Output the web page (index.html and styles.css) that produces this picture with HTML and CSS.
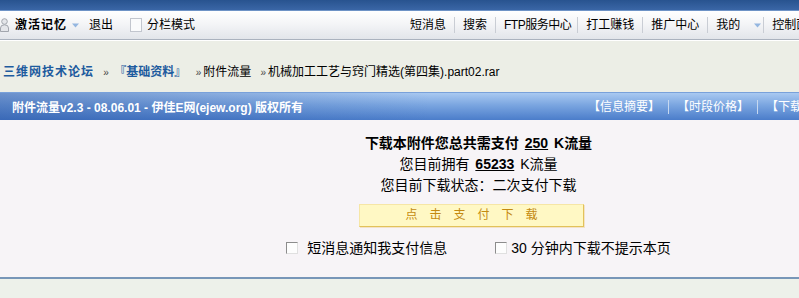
FILE: index.html
```html
<!DOCTYPE html>
<html lang="zh-CN">
<head>
    <meta charset="UTF-8" />
    <title>附件流量 - 三维网技术论坛</title>
    <link rel="stylesheet" href="styles.css">
</head>
<body>
    <div class="page">
        <div class="topband"></div>

        <div class="navbar">
            <div class="nav-left">
                <span class="user-icon">
                    <svg width="9" height="14" viewBox="0 0 9 14">
                        <circle cx="4.5" cy="3.5" r="2.8" fill="#e4e6ea" stroke="#9a9ea6" stroke-width="0.9"/>
                        <path d="M0.5 13.5 V10 Q0.5 6.8 4.5 6.8 Q8.5 6.8 8.5 10 V13.5 Z" fill="#e4e6ea" stroke="#9a9ea6" stroke-width="0.9"/>
                    </svg>
                </span>
                <a class="user-name" href="#">激活记忆</a>
                <svg class="drop" width="7" height="5" viewBox="0 0 7 5"><path d="M0 0.5 H7 L3.5 4.5 Z" fill="#94b6e0"/></svg>
                <a class="logout" href="#">退出</a>
                <span class="split-icon"></span>
                <a class="split" href="#">分栏模式</a>
            </div>
            <ul class="nav-right">
                <li>短消息</li>
                <li>搜索</li>
                <li class="ftp">FTP服务中心</li>
                <li>打工赚钱</li>
                <li>推广中心</li>
                <li class="mine">我的<svg class="drop" width="7" height="5" viewBox="0 0 7 5"><path d="M0 0.5 H7 L3.5 4.5 Z" fill="#94b6e0"/></svg></li>
                <li>控制面板</li>
                <li>退出</li>
            </ul>
        </div>

        <div class="breadcrumb">
            <a class="forum" href="#">三维网技术论坛</a>
            <span class="arrow">»</span>
            <a class="forum board" href="#">『基础资料』</a>
            <span class="arrow far">»</span>附件流量
            <span class="arrow">»</span>机械加工工艺与窍门精选(第四集).part02.rar
        </div>

        <div class="panel">
            <div class="panel-head">
                <span class="panel-title">附件流量v2.3 - 08.06.01 - 伊佳E网(ejew.org) 版权所有</span>
                <ul class="tabs">
                    <li>【信息摘要】</li>
                    <li>【时段价格】</li>
                    <li>【下载记录】</li>
                </ul>
            </div>
            <div class="panel-body">
                <p class="line need">下载本附件您总共需支付 <u>250</u> K流量</p>
                <p class="line">您目前拥有 <u>65233</u> K流量</p>
                <p class="line">您目前下载状态：二次支付下载</p>
                <div class="pay-row">
                    <a class="pay-btn" href="#">点击支付下载</a>
                </div>
                <div class="options">
                    <label class="option"><span class="check"></span>短消息通知我支付信息</label>
                    <label class="option"><span class="check"></span>30 分钟内下载不提示本页</label>
                </div>
            </div>
        </div>

        <div class="footband"></div>
    </div>
</body>
</html>
```

FILE: styles.css
```css
/* Reset */
html, body {
    margin: 0;
    padding: 0;
    overflow: hidden;
}
body {
    background: #eceee6;
    font-family: "Liberation Sans", "Noto Sans CJK SC", sans-serif;
    font-size: 12px;
    color: #000;
}
a {
    color: #000;
    text-decoration: none;
}
ul {
    list-style: none;
    margin: 0;
    padding: 0;
}
p {
    margin: 0;
}
.page {
    width: 957px;
}

/* Top band + nav */
.topband {
    height: 10px;
    background: linear-gradient(#28538f, #3a66a6);
    border-bottom: 1px solid #6e93c6;
}
.navbar {
    display: flex;
    align-items: center;
    height: 28px;
    background: linear-gradient(#ffffff, #f4f5f7 45%, #e2e5ea);
    border-bottom: 1px solid #aab2be;
    box-shadow: 0 1px 0 #fff;
    line-height: 16px;
}
.nav-left {
    display: flex;
    align-items: center;
    width: 410px;
}
.user-icon {
    display: flex;
    width: 9px;
    margin-right: 6px;
}
.user-name {
    font-weight: 700;
    letter-spacing: 1px;
}
.drop {
    display: block;
    margin-left: 5px;
}
.logout {
    margin-left: 10px;
}
.split-icon {
    width: 10px;
    height: 12px;
    margin-left: 17px;
    margin-right: 5px;
    border: 1px solid #c2c6ce;
    background: #fafbfc;
}
.nav-right {
    display: flex;
    align-items: center;
}
.nav-right li {
    padding: 0 8px;
    white-space: nowrap;
}
.nav-right li:first-child {
    padding-left: 0;
}
.nav-right li + li {
    border-left: 1px solid #c9cdd4;
}
.nav-right .ftp {
    letter-spacing: -0.5px;
    padding-right: 6px;
}
.nav-right .mine {
    display: flex;
    align-items: center;
    padding-right: 2px;
}
.nav-right .mine .drop {
    margin-left: 14px;
}

/* Breadcrumb */
.breadcrumb {
    padding: 24px 0 11px 3px;
    line-height: 16px;
    white-space: nowrap;
}
.forum {
    color: #1d5b9e;
    font-weight: 700;
    letter-spacing: 1px;
}
.forum.board {
    letter-spacing: 0;
}
.arrow {
    display: inline-block;
    margin: 0 2px 0 6px;
    font-size: 10px;
    color: #444;
}
.arrow.far {
    margin-left: 6px;
}

/* Panel */
.panel-head {
    display: flex;
    align-items: center;
    height: 27px;
    padding-left: 12px;
    border-top: 1px solid #79a1da;
    background: linear-gradient(90deg, rgba(36, 80, 160, 0.45), rgba(36, 80, 160, 0) 45%),
                linear-gradient(#a9c9f1, #7aa5e0 45%, #4b7dca);
    color: #fff;
    white-space: nowrap;
}
.panel-title {
    width: 568px;
    font-weight: 700;
}
.tabs {
    display: flex;
}
.tabs li {
    padding: 0 8px;
    line-height: 14px;
}
.tabs li + li {
    border-left: 1px solid #c6d8f0;
}
.panel-body {
    height: 144px;
    padding-top: 13px;
    background: #f7f4f7;
    font-size: 14px;
    text-align: center;
}
.line {
    line-height: 21px;
}
.need {
    font-weight: 700;
}
.line u {
    font-weight: 700;
    margin: 0 2px;
}
.pay-row {
    display: flex;
    justify-content: center;
    margin-top: 8px;
}
.pay-btn {
    display: block;
    width: 225px;
    height: 23px;
    margin-right: 14px;
    padding-left: 12px;
    box-sizing: border-box;
    border: 1px solid #f6e6a6;
    border-right-color: #e2c25a;
    border-bottom-color: #e2c25a;
    background: #fff8c4;
    box-shadow: 1px 1px 0 #f3e2c8;
    color: #c48a10;
    font-size: 12px;
    line-height: 21px;
    letter-spacing: 12px;
}
.options {
    display: flex;
    justify-content: center;
    gap: 48px;
    margin-top: 11px;
    line-height: 20px;
}
.option {
    display: flex;
    align-items: center;
}
.check {
    width: 10px;
    height: 10px;
    margin-right: 9px;
    border: 1px solid #8c8c8c;
    border-right-color: #e0e0e0;
    border-bottom-color: #e0e0e0;
    background: #fdfdfd;
}
.option + .option .check {
    margin-right: 4px;
}

/* Footer */
.footband {
    height: 19px;
    border-top: 2px solid #7896b8;
    background: #edf1ea;
}
```
